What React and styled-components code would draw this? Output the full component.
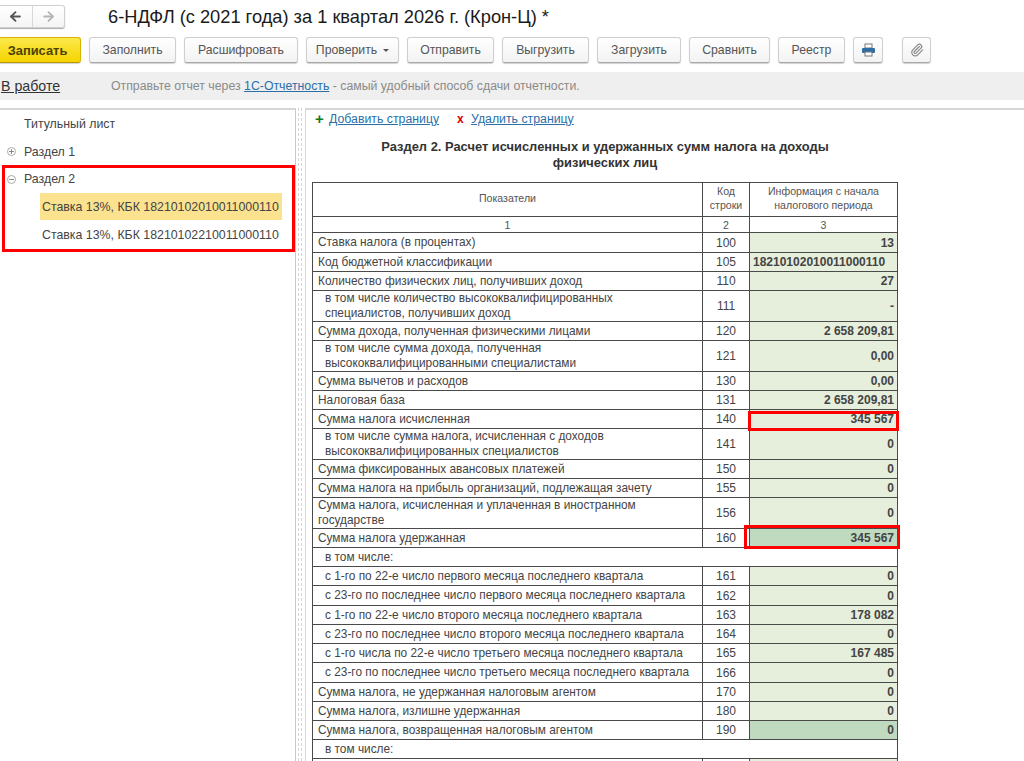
import React from 'react';
import styled, { createGlobalStyle } from 'styled-components';
import { ArrowLeft, ArrowRight, Paperclip } from 'lucide-react';

const GlobalStyle = createGlobalStyle`
  html, body { margin: 0; padding: 0; background: #fff; }
  body { font-family: "Liberation Sans", Arial, sans-serif; color: #333; }
  #root { width: 1024px; height: 761px; overflow: hidden; }
`;

const Page = styled.div`
  width: 1024px;
  height: 761px;
  overflow: hidden;
  display: flex;
  flex-direction: column;
`;

const TitleBar = styled.div`
  height: 36px;
  display: flex;
  align-items: flex-end;
`;

const NavGroup = styled.div`
  width: 65px;
  height: 23px;
  margin: 0 43px 8px 0;
  box-sizing: border-box;
  border: 1px solid #d0d0d0;
  border-left: none;
  border-radius: 0 3px 3px 0;
  box-shadow: 0 1px 1px #aaa;
  display: flex;
  background: linear-gradient(#fff, #f4f4f4);
`;

const NavButton = styled.div`
  width: 32px;
  display: flex;
  align-items: center;
  justify-content: center;
  color: ${(p) => (p.$off ? '#b5b5b5' : '#555')};
  & + & { border-left: 1px solid #d8d8d8; }
`;

const Title = styled.h1`
  margin: 0 0 7px;
  font-size: 18.25px;
  line-height: 24px;
  font-weight: 400;
  color: #1a1a1a;
  white-space: nowrap;
`;

const Toolbar = styled.div`
  height: 26px;
  margin-top: 1px;
  margin-left: -2px;
  display: flex;
  align-items: flex-start;
  gap: 8px;
`;

const Button = styled.div`
  box-sizing: border-box;
  height: 26px;
  width: ${(p) => p.$w}px;
  margin-right: ${(p) => p.$after || 0}px;
  padding-right: ${(p) => (p.$main ? 4 : 0)}px;
  border: 1px solid ${(p) => (p.$main ? '#d7b400' : '#cfcfcf')};
  border-bottom-color: ${(p) => (p.$main ? '#b89a00' : '#a8a8a8')};
  border-radius: 3px;
  background: ${(p) => (p.$main ? 'linear-gradient(#fbe94b, #f5d400)' : 'linear-gradient(#fff, #f3f3f3)')};
  box-shadow: 0 1px 1px rgba(0, 0, 0, 0.18);
  display: flex;
  align-items: center;
  justify-content: center;
  gap: 6px;
  font-size: ${(p) => (p.$main ? 12.9 : 12.25)}px;
  font-weight: ${(p) => (p.$main ? 700 : 400)};
  color: ${(p) => (p.$main ? '#4d4300' : '#555')};
  white-space: nowrap;
`;

const Caret = styled.span`
  width: 0;
  height: 0;
  border: 3px solid transparent;
  border-top-color: #555;
  border-bottom: none;
`;

const MessageBar = styled.div`
  height: 28px;
  margin-top: 9px;
  background: #efefef;
  display: flex;
  align-items: center;
  padding-left: 1px;
  font-size: 12.3px;
  color: #8a8a8a;
`;

const StateLink = styled.span`
  width: 110px;
  font-size: 14.2px;
  color: #333;
  text-decoration: underline;
`;

const BlueLink = styled.span`
  color: #2a6fa8;
  text-decoration: underline;
`;

const Body = styled.div`
  flex: 1;
  min-height: 0;
  margin-top: 8px;
  display: flex;
`;

const TreePanel = styled.div`
  width: 296px;
  flex: none;
  box-sizing: border-box;
  border-top: 2px solid #d6d6d6;
  border-right: 1px solid #c8c8c8;
  font-size: 12.35px;
`;

const TreeRow = styled.div`
  height: 27px;
  padding: 0 0 1px 24px;
  display: flex;
  align-items: center;
  color: #444;
`;

const Toggle = styled.span`
  position: relative;
  width: 7px;
  height: 7px;
  margin: 0 8px 0 -17px;
  border: 1px solid #aaa;
  border-radius: 50%;
  &::before, &::after {
    content: '';
    position: absolute;
    background: #888;
  }
  &::before { left: 1px; right: 1px; top: 3px; height: 1px; }
  &::after { display: ${(p) => (p.$plus ? 'block' : 'none')}; top: 1px; bottom: 1px; left: 3px; width: 1px; }
`;

const Frame = styled.div`
  margin: -1px 0 0 2px;
  width: 293px;
  height: 87px;
  box-sizing: border-box;
  border: 3px solid #f00;
`;

const FrameHead = styled.div`
  height: 22px;
  padding: 0 0 3px 19px;
  display: flex;
  align-items: center;
  color: #444;
`;

const LeafRow = styled.div`
  width: 242px;
  height: 27px;
  margin: 0 0 1px 35px;
  padding-left: 2px;
  box-sizing: border-box;
  display: flex;
  align-items: center;
  color: #444;
  background: ${(p) => (p.$active ? '#fbe28f' : 'transparent')};
`;

const Splitter = styled.div`
  width: 4px;
  margin-left: 2px;
  flex: none;
  border-left: 1px dashed #d4d4d4;
  border-right: 1px dashed #d4d4d4;
  box-sizing: border-box;
`;

const FormPanel = styled.div`
  flex: 1;
  margin-left: 3px;
  border-top: 2px solid #d6d6d6;
  border-left: 1px solid #d6d6d6;
  padding-left: 6px;
  overflow: hidden;
`;

const PageActions = styled.div`
  height: 17px;
  display: flex;
  align-items: center;
  padding-left: 3px;
  font-size: 12.3px;
`;

const Mark = styled.b`
  width: 14px;
  margin-left: ${(p) => p.$gap || 0}px;
  font-size: ${(p) => p.$size || 12}px;
  color: ${(p) => p.$color};
`;

const FormTitle = styled.div`
  width: 490px;
  margin: 12px 0 11px 48px;
  font-size: 12.9px;
  line-height: 16px;
  font-weight: 700;
  text-align: center;
  color: #333;
`;

const Table = styled.table`
  width: 585px;
  border-collapse: collapse;
  table-layout: fixed;
  font-size: 11.85px;
  color: #444;
`;

const Th = styled.td`
  border: 1px solid #4a4a4a;
  padding: 0 0 ${(p) => p.$lift || 0}px;
  text-align: center;
  font-size: 10.6px;
  line-height: 14px;
  height: ${(p) => p.$h}px;
  color: #555;
`;

const Label = styled.td`
  border: 1px solid #4a4a4a;
  padding: 0 0 0 ${(p) => (p.$sub ? 12 : 5)}px;
  line-height: 15px;
  white-space: pre-line;
  height: ${(p) => p.$h}px;
`;

const Code = styled.td`
  border: 1px solid #4a4a4a;
  padding: 0;
  text-align: center;
  font-size: 12px;
`;

const Value = styled.td`
  position: relative;
  border: 1px solid #4a4a4a;
  padding: 0 3px;
  text-align: ${(p) => (p.$left ? 'left' : 'right')};
  font-size: 12px;
  font-weight: 700;
  color: #444;
  background: ${(p) => (p.$strong ? '#bfdabe' : '#e6eedc')};
`;

const RedBox = styled.span`
  position: absolute;
  z-index: 1;
  inset: ${(p) => p.$inset};
  border: 3px solid #f00;
`;

// h is the distance between two row lines in the reference
const rows = [
  { label: 'Ставка налога (в процентах)', code: '100', value: '13', h: 20 },
  { label: 'Код бюджетной классификации', code: '105', value: '18210102010011000110', left: true },
  { label: 'Количество физических лиц, получивших доход', code: '110', value: '27' },
  { label: 'в том числе количество высококвалифицированных\nспециалистов, получивших доход', code: '111', value: '-', sub: true, h: 31 },
  { label: 'Сумма дохода, полученная физическими лицами', code: '120', value: '2 658 209,81' },
  { label: 'в том числе сумма дохода, полученная\nвысококвалифицированными специалистами', code: '121', value: '0,00', sub: true, h: 31 },
  { label: 'Сумма вычетов и расходов', code: '130', value: '0,00' },
  { label: 'Налоговая база', code: '131', value: '2 658 209,81' },
  { label: 'Сумма налога исчисленная', code: '140', value: '345 567', box: '1px -2px -3px -2px' },
  { label: 'в том числе сумма налога, исчисленная с доходов\nвысококвалифицированных специалистов', code: '141', value: '0', sub: true, h: 31 },
  { label: 'Сумма фиксированных авансовых платежей', code: '150', value: '0' },
  { label: 'Сумма налога на прибыль организаций, подлежащая зачету', code: '155', value: '0' },
  { label: 'Сумма налога, исчисленная и уплаченная в иностранном\nгосударстве', code: '156', value: '0', h: 31 },
  { label: 'Сумма налога удержанная', code: '160', value: '345 567', strong: true, box: '-4px -3px -2px -6px' },
  { label: 'в том числе:', span: true },
  { label: 'с 1-го по 22-е число первого месяца последнего квартала', code: '161', value: '0', sub: true },
  { label: 'с 23-го по последнее число первого месяца последнего квартала', code: '162', value: '0', sub: true, h: 20 },
  { label: 'с 1-го по 22-е число второго месяца последнего квартала', code: '163', value: '178 082', sub: true },
  { label: 'с 23-го по последнее число второго месяца последнего квартала', code: '164', value: '0', sub: true },
  { label: 'с 1-го числа по 22-е число третьего месяца последнего квартала', code: '165', value: '167 485', sub: true },
  { label: 'с 23-го по последнее число третьего месяца последнего квартала', code: '166', value: '0', sub: true, h: 20 },
  { label: 'Сумма налога, не удержанная налоговым агентом', code: '170', value: '0' },
  { label: 'Сумма налога, излишне удержанная', code: '180', value: '0' },
  { label: 'Сумма налога, возвращенная налоговым агентом', code: '190', value: '0', strong: true },
  { label: 'в том числе:', span: true },
  { label: '', code: '', value: '' },
];

const PrinterIcon = () => (
  <svg width="15" height="14" viewBox="0 0 15 14">
    <rect x="4" y="1" width="7" height="4" fill="#fff" stroke="#777" />
    <rect x="1" y="5" width="13" height="5" rx="1" fill="#2f6ea5" />
    <rect x="4" y="9" width="7" height="4" fill="#fff" stroke="#777" />
  </svg>
);

export default function App() {
  return (
    <Page>
      <GlobalStyle />
      <TitleBar>
        <NavGroup>
          <NavButton><ArrowLeft size={15} strokeWidth={3} /></NavButton>
          <NavButton $off><ArrowRight size={15} strokeWidth={3} /></NavButton>
        </NavGroup>
        <Title>6-НДФЛ (с 2021 года) за 1 квартал 2026 г. (Крон-Ц) *</Title>
      </TitleBar>
      <Toolbar>
        <Button $main $w={83}>Записать</Button>
        <Button $w={87}>Заполнить</Button>
        <Button $w={114}>Расшифровать</Button>
        <Button $w={93}>Проверить <Caret /></Button>
        <Button $w={87}>Отправить</Button>
        <Button $w={87}>Выгрузить</Button>
        <Button $w={84}>Загрузить</Button>
        <Button $w={81}>Сравнить</Button>
        <Button $w={67}>Реестр</Button>
        <Button $w={30} $after={11}><PrinterIcon /></Button>
        <Button $w={29}><Paperclip size={14} color="#888" /></Button>
      </Toolbar>
      <MessageBar>
        <StateLink>В работе</StateLink>
        <span>Отправьте отчет через <BlueLink>1С-Отчетность</BlueLink> - самый удобный способ сдачи отчетности.</span>
      </MessageBar>
      <Body>
        <TreePanel>
          <TreeRow>Титульный лист</TreeRow>
          <TreeRow><Toggle $plus />Раздел 1</TreeRow>
          <Frame>
            <FrameHead><Toggle />Раздел 2</FrameHead>
            <LeafRow $active>Ставка 13%, КБК 18210102010011000110</LeafRow>
            <LeafRow>Ставка 13%, КБК 18210102210011000110</LeafRow>
          </Frame>
        </TreePanel>
        <Splitter />
        <FormPanel>
          <PageActions>
            <Mark $color="#14781a" $size={15}>+</Mark>
            <BlueLink>Добавить страницу</BlueLink>
            <Mark $color="#e00000" $gap={18}>x</Mark>
            <BlueLink>Удалить страницу</BlueLink>
          </PageActions>
          <FormTitle>Раздел 2. Расчет исчисленных и удержанных сумм налога на доходы физических лиц</FormTitle>
          <Table>
            <colgroup>
              <col style={{ width: 390 }} />
              <col style={{ width: 47 }} />
              <col style={{ width: 148 }} />
            </colgroup>
            <tbody>
              <tr>
                <Th $h={30} $lift={3}>Показатели</Th>
                <Th $lift={3}>Код<br />строки</Th>
                <Th $lift={3}>Информация с начала<br />налогового периода</Th>
              </tr>
              <tr>
                <Th $h={15}>1</Th>
                <Th>2</Th>
                <Th>3</Th>
              </tr>
              {rows.map((r, i) =>
                r.span ? (
                  <tr key={i}>
                    <Label colSpan={3} $sub $h={18}>{r.label}</Label>
                  </tr>
                ) : (
                  <tr key={i}>
                    <Label $sub={r.sub} $h={(r.h || 19) - 1}>{r.label}</Label>
                    <Code>{r.code}</Code>
                    <Value $left={r.left} $strong={r.strong}>
                      {r.value}
                      {r.box && <RedBox $inset={r.box} />}
                    </Value>
                  </tr>
                )
              )}
            </tbody>
          </Table>
        </FormPanel>
      </Body>
    </Page>
  );
}
